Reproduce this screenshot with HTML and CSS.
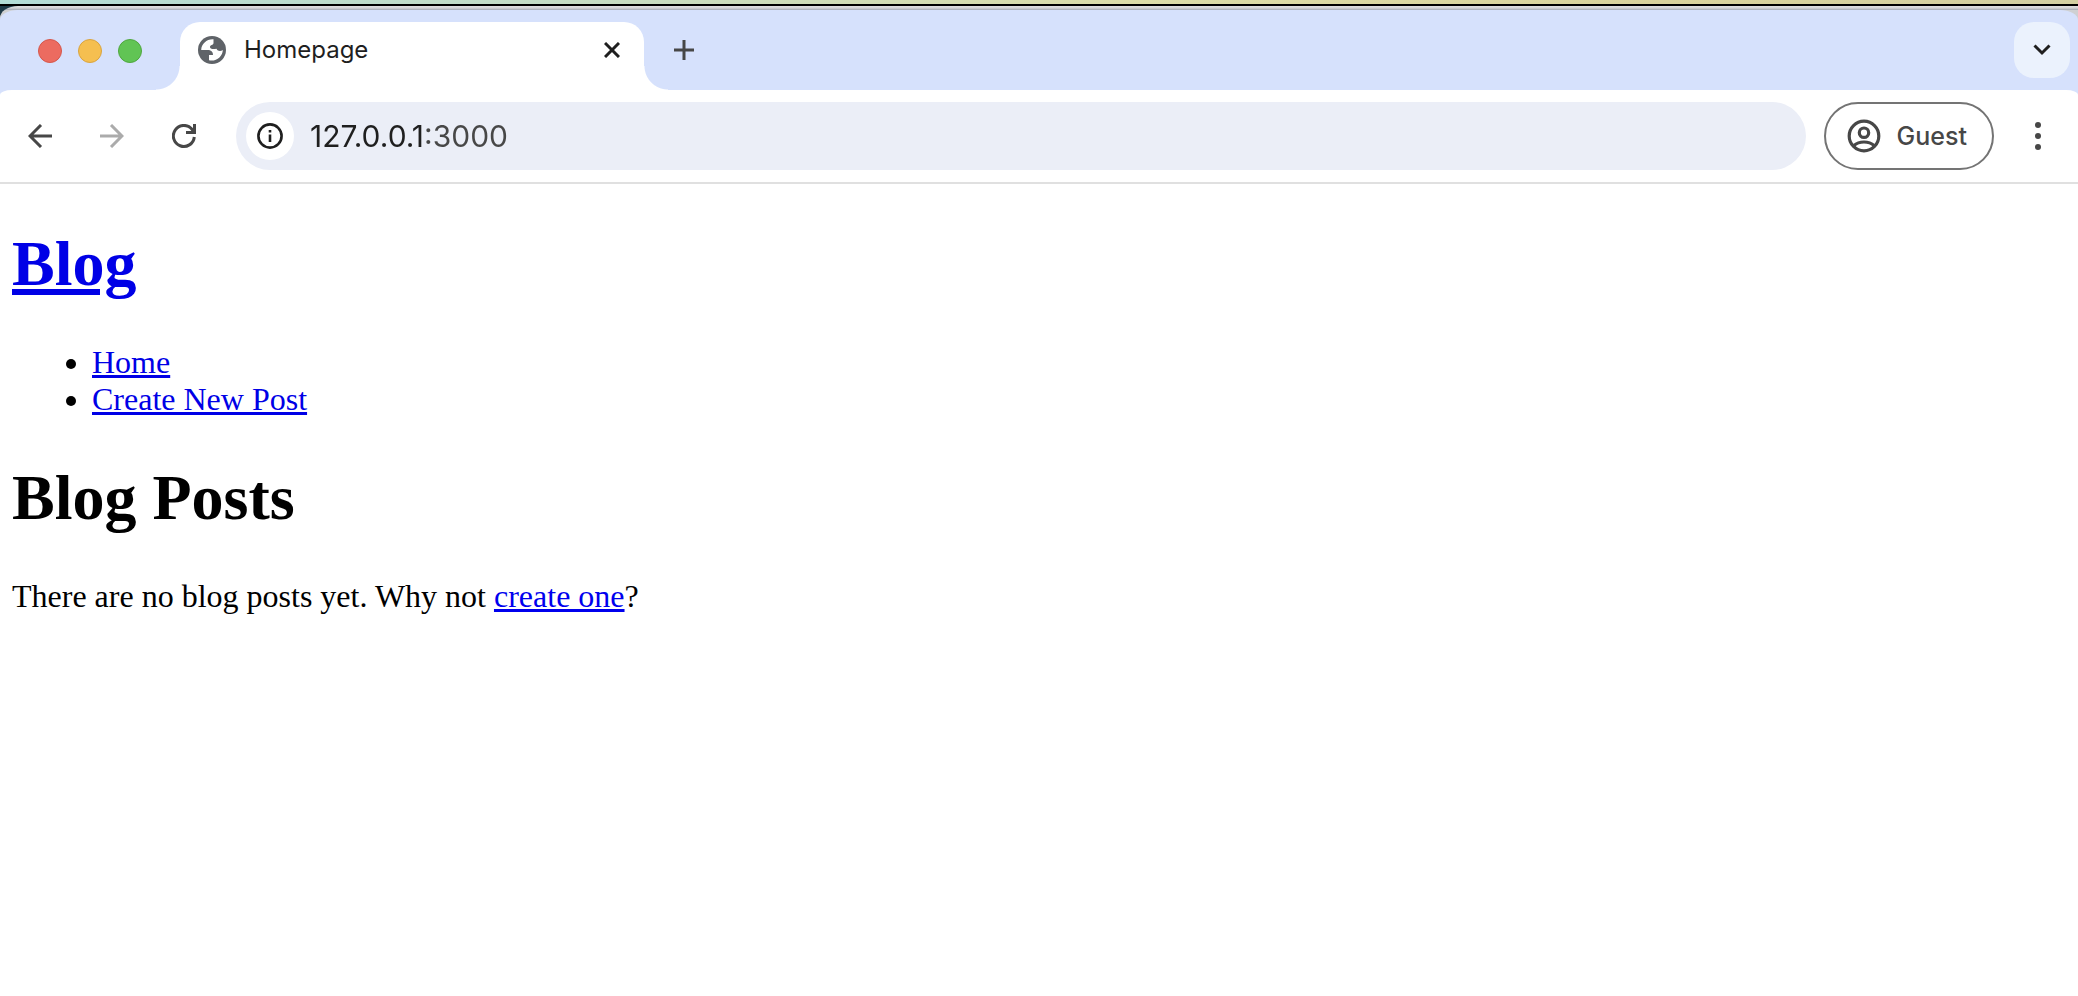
FILE: index.html
```html
<!DOCTYPE html>
<html lang="en">
<head>
<meta charset="utf-8">
<title>Homepage</title>
<link rel="stylesheet" href="styles.css">
</head>
<body>
<div class="wallpaper"></div>
<div class="desktop">
<div class="window">
  <header class="tab-strip">
    <div class="traffic-lights">
      <button class="light light-close" aria-label="Close window"></button>
      <button class="light light-minimize" aria-label="Minimize window"></button>
      <button class="light light-zoom" aria-label="Zoom window"></button>
    </div>
    <div class="tab">
      <svg class="favicon" viewBox="0 0 28 28" aria-hidden="true">
        <circle cx="14" cy="14" r="14" fill="#5f6368"/>
        <path fill="#fff" d="M15.5 3.3C9 2.8 3.4 7.800 3.200 14H9.500C13 14 15 15.800 15 19H11V24.300C18 26 24.800 20.500 24.800 14C22.500 15.800 19.500 15.200 18.500 12.800C15 13.300 12 13.200 12 11C12 8.500 15.500 9.500 15.500 7Z"/>
      </svg>
      <span class="tab-title">Homepage</span>
      <button class="icon-button tab-close" aria-label="Close tab">
        <svg width="16" height="16" viewBox="0 0 16 16"><path d="M1 1L15 15M15 1L1 15" stroke="#1f1f1f" stroke-width="3"/></svg>
      </button>
    </div>
    <button class="icon-button new-tab" aria-label="New tab">
      <svg width="20" height="20" viewBox="0 0 20 20"><path d="M10 0V20M0 10H20" stroke="#474747" stroke-width="3"/></svg>
    </button>
    <button class="icon-button tab-search" aria-label="Search tabs">
      <svg width="18" height="12" viewBox="0 0 18 12"><path d="M1.500 1.500L9 9L16.500 1.500" fill="none" stroke="#1f1f1f" stroke-width="3"/></svg>
    </button>
  </header>
  <nav class="toolbar" aria-label="Browser toolbar">
    <div class="history">
      <button class="icon-button" aria-label="Back">
        <svg width="24" height="24" viewBox="0 0 24 24"><path d="M24 12H2M13 1L2 12L13 23" fill="none" stroke="#474747" stroke-width="3"/></svg>
      </button>
      <button class="icon-button" aria-label="Forward" disabled>
        <svg width="24" height="24" viewBox="0 0 24 24"><path d="M0 12H22M11 1L22 12L11 23" fill="none" stroke="#ababab" stroke-width="3"/></svg>
      </button>
      <button class="icon-button" aria-label="Reload">
        <svg width="24" height="24" viewBox="0 0 24 24"><path d="M22.300 13A10.500 10.500 0 1 1 20 5.300L22 8M22.500 0V8.500H14" fill="none" stroke="#474747" stroke-width="3"/></svg>
      </button>
    </div>
    <div class="omnibox">
      <button class="site-info" aria-label="View site information">
        <svg width="26" height="26" viewBox="0 0 26 26"><circle cx="13" cy="13" r="11.600" fill="none" stroke="#1f1f1f" stroke-width="2.600"/><path d="M13 11.500V19M13 7V9.600" stroke="#1f1f1f" stroke-width="2.600"/></svg>
      </button>
      <input class="address" type="text" aria-label="Address" value="127.0.0.1:3000" spellcheck="false">
    </div>
    <button class="profile">
      <svg width="34" height="34" viewBox="0 0 34 34" fill="none" stroke="#474747" stroke-width="3.200" aria-hidden="true"><circle cx="17" cy="17" r="14.800"/><circle cx="17" cy="13.700" r="4.700"/><path d="M7 26.500C12 21.800 22 21.800 27 26.500"/></svg>
      <span>Guest</span>
    </button>
    <button class="icon-button" aria-label="Menu">
      <svg width="6" height="28" viewBox="0 0 6 28" fill="#474747"><circle cx="3" cy="3" r="3"/><circle cx="3" cy="14" r="3"/><circle cx="3" cy="25" r="3"/></svg>
    </button>
  </nav>
  <main class="page">
    <h1 class="heading"><a href="#">Blog</a></h1>
    <ul class="menu">
      <li><a href="#">Home</a></li>
      <li><a href="#">Create New Post</a></li>
    </ul>
    <h1 class="heading">Blog Posts</h1>
    <p class="message">There are no blog posts yet. Why not <a href="#">create one</a>?</p>
  </main>
</div>
</div>
</body>
</html>
```
FILE: styles.css
```css
* {
  box-sizing: border-box;
}

body {
  margin: 0;
  min-height: 100vh;
  display: flex;
  flex-direction: column;
  background: #fff;
  font-family: Inter, "Noto Sans", sans-serif;
}

button {
  margin: 0;
  padding: 0;
  border: 0;
  background: none;
  font: inherit;
}

svg {
  display: block;
}

.wallpaper {
  height: 4px;
  background: linear-gradient(90deg, #b3dcd6, #c3dcc6 25%, #dcdca8 55%, #d9d29c 80%, #d3cfa2);
}

.desktop {
  flex: 1;
  display: flex;
  border-top: 2px solid #000;
  background: linear-gradient(90deg, #1f3a48 50%, #cfd0d2 50%);
}

.window {
  flex: 1;
  display: flex;
  flex-direction: column;
  padding-top: 4px;
  overflow: hidden;
  border-radius: 18px 0 0 0 / 12px 0 0 0;
  background: linear-gradient(#e0e0e2, #d4d4d6 2px, #a3a8b4 4px, #cfd0d2 4px);
}

.tab-strip {
  display: flex;
  height: 80px;
  padding: 12px 8px 0 38px;
  border-radius: 18px 18px 0 0 / 10px 10px 0 0;
  background: #d6e1fc;
}

.traffic-lights {
  display: flex;
  gap: 16px;
  margin-right: 38px;
  padding-top: 17px;
}

.light {
  width: 24px;
  height: 24px;
  border: 1px solid;
  border-radius: 50%;
}

.light-close {
  border-color: #d5574c;
  background: #ec6b60;
}

.light-minimize {
  border-color: #d9a440;
  background: #f5bf50;
}

.light-zoom {
  border-color: #50a73f;
  background: #61c454;
}

.tab {
  position: relative;
  display: flex;
  align-items: center;
  width: 464px;
  padding: 0 20px 12px 18px;
  border-radius: 20px 20px 0 0;
  background: #fff;
}

.tab::before,
.tab::after {
  content: "";
  position: absolute;
  bottom: 0;
  width: 24px;
  height: 24px;
}

.tab::before {
  right: 100%;
  background: radial-gradient(circle at 0 0, transparent 23px, #fff 24px);
}

.tab::after {
  left: 100%;
  background: radial-gradient(circle at 100% 0, transparent 23px, #fff 24px);
}

.favicon {
  width: 28px;
  height: 28px;
}

.tab-title {
  flex: 1;
  padding-left: 18px;
  font-size: 24px;
  line-height: 32px;
  color: #1f1f1f;
}

.icon-button {
  display: flex;
  align-items: center;
  justify-content: center;
  width: 48px;
  height: 48px;
}

.tab-close {
  width: 24px;
}

.new-tab {
  width: 56px;
  height: 56px;
  margin-left: 12px;
}

.tab-search {
  width: 56px;
  height: 56px;
  margin-left: auto;
  border-radius: 20px;
  background: #ebf2fd;
}

.toolbar {
  display: flex;
  align-items: center;
  padding: 12px 16px;
  border-bottom: 2px solid #e0e0e0;
  border-radius: 12px 12px 0 0 / 5px 5px 0 0;
  background: #fff;
  box-shadow: 0 0 0 6px #d6e1fc;
  clip-path: inset(0);
}

.history {
  display: flex;
  gap: 24px;
}

.omnibox {
  flex: 1;
  display: flex;
  align-items: center;
  height: 68px;
  margin: 0 18px 0 28px;
  padding: 0 10px;
  border-radius: 34px;
  background: #ebeef7;
}

.site-info {
  display: flex;
  align-items: center;
  justify-content: center;
  width: 48px;
  height: 48px;
  border-radius: 50%;
  background: #fff;
}

.address {
  flex: 1;
  min-width: 0;
  height: 48px;
  padding: 0 0 0 16px;
  border: 0;
  outline: 0;
  background: linear-gradient(90deg, #1f1f1f 129px, #474747 129px) text;
  font: 30px Inter, "Noto Sans", sans-serif;
  color: transparent;
}

.profile {
  display: flex;
  align-items: center;
  gap: 16px;
  height: 68px;
  margin-right: 20px;
  padding: 0 25px 0 21px;
  border: 2px solid #747474;
  border-radius: 34px;
  font-size: 25px;
  font-weight: 500;
  color: #474747;
}

.page {
  flex: 1;
  padding: 0 12px;
  background: #fff;
  font-family: "Liberation Serif", "Times New Roman", serif;
  font-size: 32px;
  line-height: 37px;
  color: #000;
}

.page a {
  color: #0000e6;
  text-decoration-thickness: 3px;
  text-underline-offset: 2px;
}

.page .heading a {
  text-decoration-thickness: 6px;
  text-underline-offset: 4px;
}

.heading {
  margin: 43px 0;
  font-size: 64px;
  line-height: 74px;
}

.menu {
  margin: 0;
  padding-left: 80px;
}

.message {
  margin: 0;
}

.page .message a {
  color: #0000ee;
}
```
